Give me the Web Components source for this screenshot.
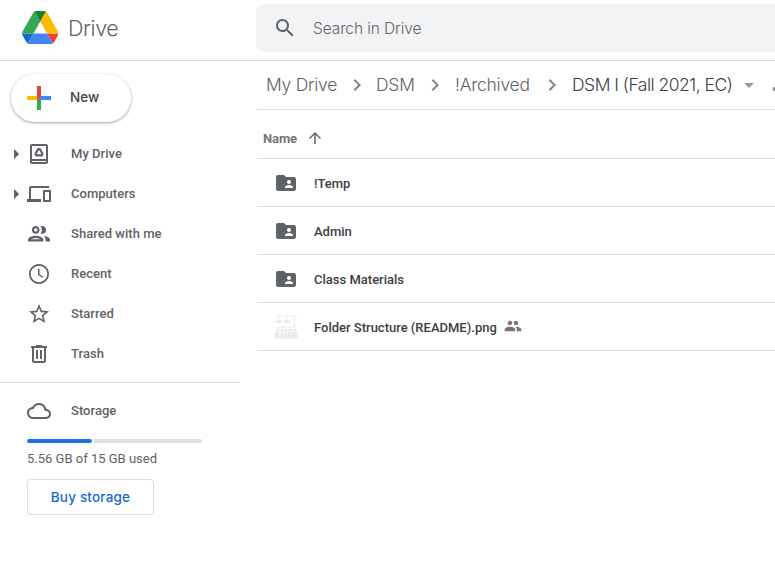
<!DOCTYPE html>
<html lang="en">
<head>
<meta charset="utf-8">
<title>Drive</title>
<style>
html,body{margin:0;height:100%;overflow:hidden;background:#fff}
body{font:500 13px Roboto,"Liberation Sans",sans-serif;color:#5f6368}
</style>
</head>
<body>
<drive-app></drive-app>
<script>
const ICONS = {
  drive: '<path d="M19 2H5C3.9 2 3 2.9 3 4v16c0 1.1.9 2 2 2h14c1.1 0 2-.9 2-2V4c0-1.1-.9-2-2-2zm0 18H5v-1h14v1zm0-3H5V4h14v13z"/><path d="M11.100 7.200h1.800l2.600 4.600-.7 1.600H9.200l-.7-1.600z" fill="none" stroke="currentColor" stroke-width="2.200" stroke-linejoin="round"/>',
  computers: '<path d="M4 6h18V4H4c-1.1 0-2 .9-2 2v11H0v3h14v-3H4V6zm19 2h-6c-.55 0-1 .45-1 1v10c0 .55.45 1 1 1h6c.55 0 1-.45 1-1V9c0-.55-.45-1-1-1zm-1 10h-4v-8h4v8z"/>',
  shared: '<g transform="translate(-1.200 -1.400) scale(1.100)"><path d="M9 13.75c-2.34 0-7 1.17-7 3.5V19h14v-1.75c0-2.33-4.66-3.5-7-3.5zM4.34 17c.84-.58 2.87-1.25 4.66-1.25s3.82.67 4.66 1.25H4.34zM9 12c1.93 0 3.5-1.57 3.5-3.5S10.93 5 9 5 5.500 6.570 5.500 8.500 7.070 12 9 12zm0-5c.83 0 1.500.67 1.500 1.500S9.830 10 9 10s-1.500-.67-1.500-1.500S8.170 7 9 7zm7.040 6.810c1.160.84 1.960 1.960 1.960 3.440V19h4v-1.750c0-2.020-3.500-3.170-5.960-3.440zM15 12c1.930 0 3.500-1.570 3.500-3.500S16.930 5 15 5c-.54 0-1.040.13-1.500.35.63.89 1 1.980 1 3.150s-.37 2.260-1 3.150c.46.22.96.35 1.500.35z"/></g>',
  recent: '<path d="M11.99 2C6.47 2 2 6.48 2 12s4.470 10 9.990 10C17.520 22 22 17.520 22 12S17.520 2 11.990 2zM12 20.200c-4.530 0-8.200-3.670-8.200-8.200S7.470 3.800 12 3.800s8.200 3.670 8.200 8.200-3.670 8.200-8.200 8.200zM12.500 7H11v6l4.600 2.800.75-1.230-3.850-2.300z"/>',
  star: '<path d="M22 9.240l-7.190-.62L12 2 9.190 8.630 2 9.240l5.460 4.730L5.820 21 12 17.270 18.180 21l-1.630-7.030L22 9.240zM12 15.400l-3.760 2.270 1-4.280-3.320-2.880 4.380-.38L12 6.100l1.710 4.040 4.380.38-3.320 2.880 1 4.280L12 15.400z"/>',
  trash: '<path d="M15 4V3H9v1H4v2h1v13c0 1.100.9 2 2 2h10c1.100 0 2-.9 2-2V6h1V4h-5zm2 15H7V6h10v13zM9 8h2v9H9zm4 0h2v9h-2z"/>',
  cloud: '<path d="M19.350 10.040C18.670 6.590 15.640 4 12 4 9.110 4 6.600 5.640 5.350 8.040 2.340 8.360 0 10.910 0 14c0 3.310 2.690 6 6 6h13c2.760 0 5-2.240 5-5 0-2.640-2.050-4.780-4.650-4.960zM19 18H6c-2.210 0-4-1.790-4-4 0-2.050 1.530-3.760 3.560-3.970l1.070-.11.5-.95C8.080 7.140 9.940 6 12 6c2.620 0 4.880 1.860 5.390 4.430l.3 1.500 1.530.11c1.560.1 2.780 1.410 2.780 2.960 0 1.650-1.350 3-3 3z"/>',
  search: '<path d="M15.500 14h-.79l-.28-.27C15.410 12.590 16 11.110 16 9.500 16 5.910 13.090 3 9.500 3S3 5.910 3 9.500 5.910 16 9.500 16c1.610 0 3.090-.59 4.230-1.570l.27.28v.79l5 4.990L20.490 19l-4.990-5zm-6 0C7.010 14 5 11.990 5 9.500S7.010 5 9.500 5 14 7.010 14 9.500 11.990 14 9.500 14z"/>',
  chevron: '<path d="M8.590 7.410L13.170 12l-4.580 4.590L10 18l6-6-6-6z"/>',
  right: '<path d="M8.500 6v12l6-6z"/>',
  down: '<path d="M7 10l5 5 5-5z"/>',
  up: '<path d="M4 12l1.410 1.410L11 7.830V20h2V7.830l5.580 5.590L20 12l-8-8z"/>',
  folder: '<path d="M20 6h-8l-2-2H4c-1.100 0-1.990.9-1.990 2L2 18c0 1.100.9 2 2 2h16c1.100 0 2-.9 2-2V8c0-1.100-.9-2-2-2zm-5 3c1.100 0 2 .9 2 2s-.9 2-2 2-2-.9-2-2 .9-2 2-2zm4 8h-8v-1c0-1.330 2.670-2 4-2s4 .67 4 2z"/>',
  people: '<path d="M16 11c1.660 0 2.990-1.340 2.990-3S17.660 5 16 5s-3 1.340-3 3 1.340 3 3 3zm-8 0c1.660 0 2.990-1.340 2.990-3S9.660 5 8 5 5 6.340 5 8s1.340 3 3 3zm0 2c-2.330 0-7 1.170-7 3.500V19h14v-2.500C15 14.170 10.330 13 8 13zm8 0c-.29 0-.62.02-.97.05C16.190 13.890 17 15.020 17 16.500V19h6v-2.500c0-2.330-4.670-3.500-7-3.500z"/>',
  plus: '<path fill="#ea4335" d="M10 0h4v11.500L10 14z"/><path fill="#fbbc04" d="M0 10h10v4H0z"/><path fill="#34a853" d="M10 14l4-2v12h-4z"/><path fill="#4285f4" d="M14 10h10v4H10z"/><path fill="#ea4335" d="M10 10h4l-4 4z"/>',
  thumb: '<g fill="none" stroke="#b8b8b8" stroke-opacity=".4" stroke-width=".7"><path d="M2 1h5M10 1h5M17 1h6M4.500 1v4M12.500 1v5M20.500 1v11M2 6.500h6M10 7h6M4 12h17M4 12v4M8 12v4M12 12v4M16 12v4M21 12v4M1 17h22M2 17v6M4 17v6M8 17v6M11 17v6M15 17v6M19 17v6M22 17v6"/></g><path fill="#aaa" fill-opacity=".14" d="M2 5h6v3H2zM10 5h6v3h-6zM2 14h20v2H2zM0 18h24v6H0z"/>'
};
function define(name, html, setup) {
  const t = document.createElement('template');
  t.innerHTML = html;
  customElements.define(name, class extends HTMLElement {
    constructor() { super(); this.attachShadow({mode:'open'}).append(t.content.cloneNode(true)); }
    connectedCallback() { if (setup) setup(this, this.shadowRoot); }
  });
}
define('ui-icon', '<style>:host{display:block;flex:none;width:var(--size,24px);height:var(--size,24px)}svg{display:block;width:100%;height:100%}</style><svg viewBox="0 0 24 24" fill="currentColor"></svg>',
  (el, r) => r.querySelector('svg').innerHTML = ICONS[el.getAttribute('name')]);

define('drive-logo', `<style>:host{display:flex;align-items:center;height:60px;width:256px;box-sizing:border-box;padding-left:21.500px;flex:none}
svg{width:36.500px;height:33px;margin-top:-5px;flex:none}
span{font:350 21.500px Inter,sans-serif;letter-spacing:-.4px;margin:-4px 0 0 10px}</style>
<svg viewBox="0 0 87.3 78" preserveAspectRatio="none"><path d="m6.600 66.850 3.850 6.650c.8 1.400 1.950 2.500 3.300 3.300l13.750-23.800H0c0 1.550.4 3.100 1.200 4.500z" fill="#1967d2"/><path d="M43.650 25 29.900 1.200c-1.350.8-2.500 1.900-3.300 3.300l-25.400 44A9.060 9.060 0 0 0 0 53h27.500z" fill="#34a853"/><path d="M73.550 76.800c1.350-.8 2.500-1.900 3.300-3.300l9.250-16c.8-1.400 1.200-2.950 1.200-4.500H59.800z" fill="#ea4335"/><path d="M43.650 25 57.400 1.200C56.050.4 54.500 0 52.900 0H34.400c-1.600 0-3.150.45-4.500 1.200z" fill="#188038"/><path d="M59.800 53H27.500L13.750 76.800c1.350.8 2.900 1.200 4.500 1.200h50.800c1.600 0 3.150-.45 4.500-1.200z" fill="#4285f4"/><path d="m73.400 26.500-12.700-22c-.8-1.400-1.950-2.500-3.300-3.300L43.650 25 59.800 53h27.450c0-1.550-.4-3.100-1.200-4.500z" fill="#fbbc04"/></svg><span>Drive</span>`);

define('search-box', `<style>:host{display:flex;flex:1;height:48px;margin-top:4px;box-sizing:border-box;padding-left:17px;align-items:center;background:#f1f3f4;border-radius:8px 0 0 8px}
span{font:300 15.500px Inter,sans-serif;letter-spacing:-.1px;margin:1px 0 0 16px;color:#5f6368;white-space:nowrap}</style><ui-icon name="search"></ui-icon><span><slot></slot></span>`);

define('new-button', `<style>:host{display:flex;align-items:center;box-sizing:border-box;width:120px;height:48px;margin:13px 0 0 11px;padding-left:16px;border-radius:24px;background:#fff;box-shadow:0 1px 2px rgba(60,64,67,.3),0 1px 3px 1px rgba(60,64,67,.15)}
span{font:500 13.500px Inter,sans-serif;color:#3c4043;margin:-2px 0 0 19px}</style><ui-icon name="plus"></ui-icon><span><slot></slot></span>`);

define('nav-item', `<style>:host{display:flex;align-items:center;height:40px;padding-left:27px;position:relative}
.arrow{position:absolute;left:7px;top:10px;--size:20px;display:none}:host([expand]) .arrow{display:block}
.icon{height:24px}.label{margin-left:20px;letter-spacing:.03px;line-height:16px}</style><ui-icon class="arrow" name="right"></ui-icon><span class="icon"></span><span class="label"><slot></slot></span>`,
  (el, r) => { const i = document.createElement('ui-icon'); i.setAttribute('name', el.getAttribute('icon')); r.querySelector('.icon').replaceChildren(i); });

define('storage-panel', `<style>:host{display:block;width:240px;border-top:1px solid #dadce0;margin-top:8px;padding-top:8px}
.bar{display:flex;gap:2px;width:175px;height:4px;margin:8px 0 0 27px}
.used{width:65px;background:#1a73e8;border-radius:2px}.free{flex:1;background:#dfdfdf;border-radius:0 2px 2px 0}
p{margin:8px 0 0 27px;font:400 13px/16px Roboto,sans-serif}
button{display:block;box-sizing:border-box;width:127px;height:36px;margin:12px 0 0 27px;padding:0;background:#fff;border:1px solid #dadce0;border-radius:4px;font:500 13.500px Inter,sans-serif;letter-spacing:.18px;color:#1967d2}</style>
<nav-item icon="cloud">Storage</nav-item><div class="bar"><div class="used"></div><div class="free"></div></div><p>5.56 GB of 15 GB used</p><button>Buy storage</button>`);

define('side-bar', `<style>:host{display:block;width:256px;flex:none}nav{margin-top:12px}</style><new-button>New</new-button>
<nav><nav-item icon="drive" expand>My Drive</nav-item><nav-item icon="computers" expand>Computers</nav-item><nav-item icon="shared">Shared with me</nav-item><nav-item icon="recent">Recent</nav-item><nav-item icon="star">Starred</nav-item><nav-item icon="trash">Trash</nav-item></nav><storage-panel></storage-panel>`);

define('crumb-bar', `<style>:host{display:flex;align-items:center;height:48px;margin-left:1px;padding-left:9px;border-bottom:1px solid #dadce0;font:350 17.500px Inter,sans-serif;letter-spacing:-.25px;white-space:nowrap;overflow:hidden}
span{flex:none;margin-top:-1px}ui-icon{color:#80868b}.last{color:#3c4043;letter-spacing:-.5px}</style>
<span style="width:79px">My Drive</span><ui-icon name="chevron"></ui-icon><span style="width:47px;margin-left:7px">DSM</span><ui-icon name="chevron"></ui-icon><span style="width:85px;margin-left:8px">!Archived</span><ui-icon name="chevron"></ui-icon><span class="last" style="width:161px;margin-left:8px">DSM I (Fall 2021, EC)</span><ui-icon name="down" style="margin-left:4px;color:#9a9a9a"></ui-icon><ui-icon name="people" style="margin-left:11px;--size:20px"></ui-icon>`);

define('file-row', `<style>:host{display:flex;align-items:center;height:47px;margin-left:1px;padding-left:17px;border-bottom:1px solid #dadce0;color:#3c4043}
ui-icon{color:#5f6368}span{margin:2px 0 0 16px;line-height:16px;white-space:nowrap}.people{--size:18px;color:#757575;margin:-2px 0 0 7px;display:none}:host([shared]) .people{display:block}</style><ui-icon></ui-icon><span><slot></slot></span><ui-icon class="people" name="people"></ui-icon>`,
 (el, r) => { const i=document.createElement('ui-icon'); i.setAttribute('name',el.getAttribute('icon')); r.querySelector('ui-icon').replaceWith(i); });

define('file-list', `<style>:host{display:block}.head{display:flex;align-items:center;height:48px;margin-left:1px;padding-left:6px;border-bottom:1px solid #dadce0;color:#757575;font-weight:700;letter-spacing:-.1px}
ui-icon{--size:18px;margin-left:9px;color:#5f6368}.head span{margin-top:8px}.head ui-icon{margin-top:7px}</style>
<div class="head"><span>Name</span><ui-icon name="up"></ui-icon></div>
<file-row icon="folder">!Temp</file-row><file-row icon="folder">Admin</file-row><file-row icon="folder">Class Materials</file-row><file-row icon="thumb" shared>Folder Structure (README).png</file-row>`);

define('drive-app', `<style>:host{display:block;height:100vh;overflow:hidden}header{display:flex;height:60px;border-bottom:1px solid #dadce0}.body{display:flex}main{flex:1;min-width:0}</style>
<header><drive-logo></drive-logo><search-box>Search in Drive</search-box></header><div class="body"><side-bar></side-bar><main><crumb-bar></crumb-bar><file-list></file-list></main></div>`);
</script>
</body>
</html>
